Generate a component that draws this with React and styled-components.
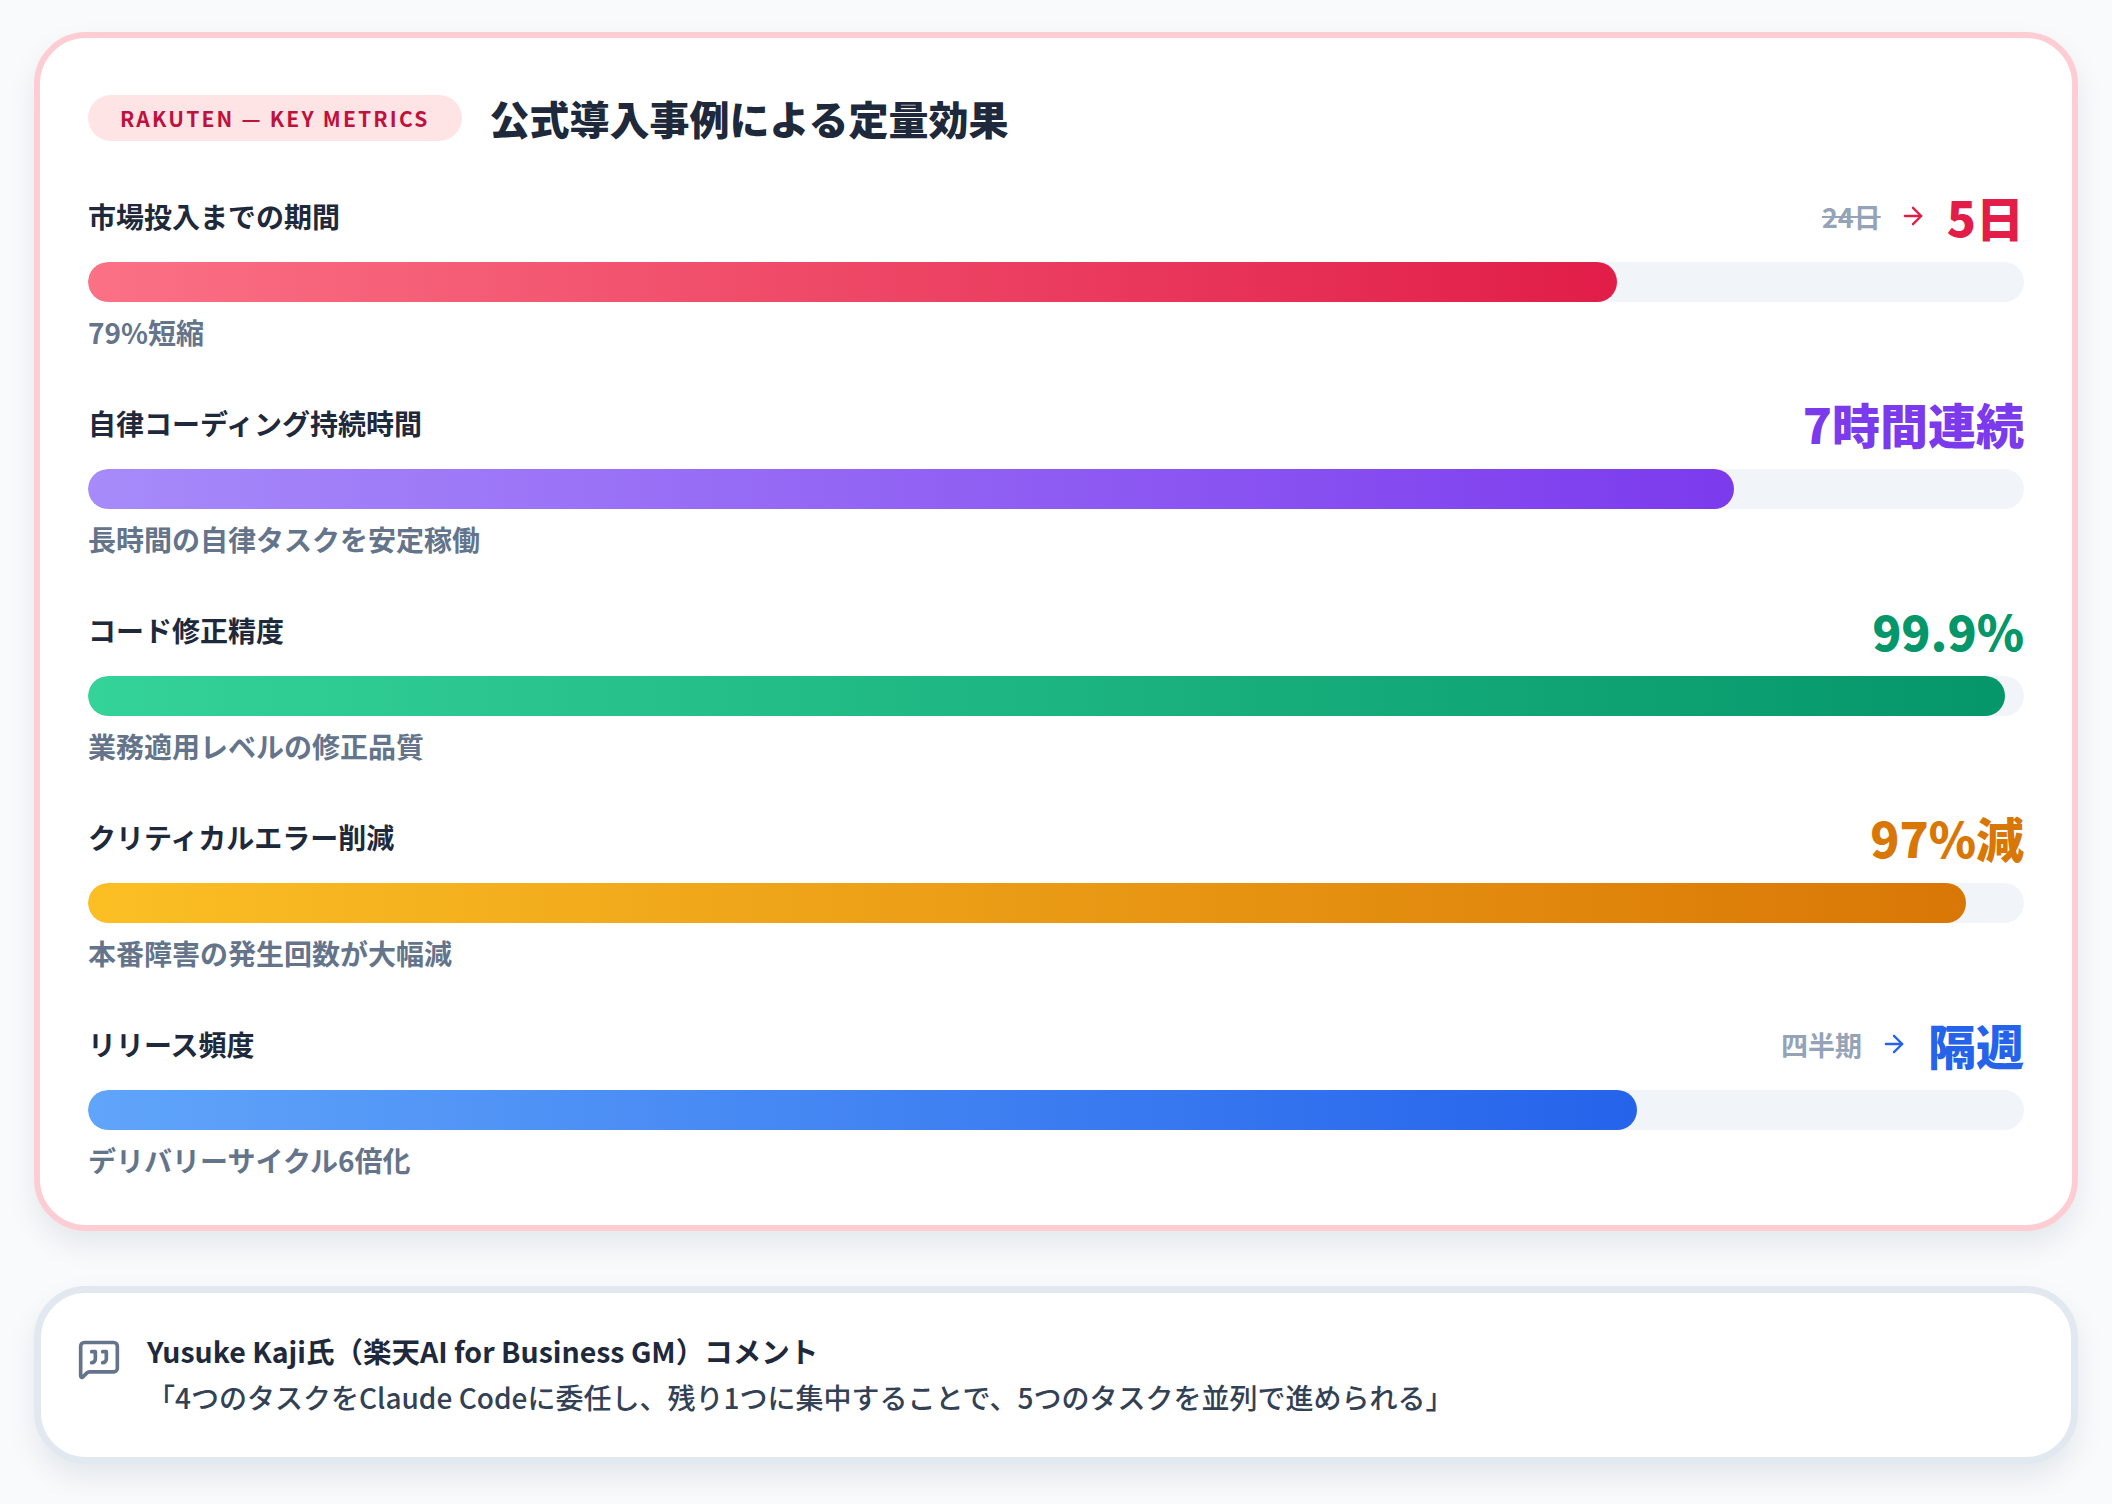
import React from 'react'
import styled, {createGlobalStyle} from 'styled-components'
import {MessageSquareQuote, ArrowRight} from 'lucide-react'

const GlobalStyle = createGlobalStyle`
  body {
    margin: 0;
    background: #f8fafc;
    font-family: "Noto Sans CJK JP", "Noto Sans", sans-serif;
  }
`;

const Page = styled.div`
  padding: 32px 34px;
`;

const Card = styled.div`
  background: #ffffff;
  border: 6px solid #fecdd3;
  border-radius: 52px;
  padding: 51px 48px 48px;
  box-shadow: 0 14px 30px rgba(15, 23, 42, 0.08);
`;

const Header = styled.div`
  display: flex;
  align-items: center;
  gap: 28px;
  margin-bottom: 41px;
`;

const Badge = styled.span`
  display: inline-flex;
  align-items: center;
  height: 46px;
  padding: 0 32px;
  border-radius: 23px;
  background: #ffe4e6;
  color: #be123c;
  font-size: 21px;
  font-weight: 700;
  letter-spacing: 2.2px;
`;

const Title = styled.h1`
  margin: 0;
  font-size: 40px;
  font-weight: 900;
  color: #1e293b;
`;

const Rows = styled.div`
  display: flex;
  flex-direction: column;
  gap: 46px;
`;

const Row = styled.div``;

const LabelLine = styled.div`
  display: flex;
  justify-content: space-between;
  align-items: center;
  height: 56px;
`;

const Label = styled.span`
  font-size: 28px;
  font-weight: 700;
  color: #1e293b;
`;

const ValueGroup = styled.div`
  display: flex;
  align-items: center;
  gap: 18px;
`;

const Before = styled.span`
  font-size: 27px;
  font-weight: 700;
  color: #94a3b8;
  text-decoration: ${(p) => (p.strike ? 'line-through' : 'none')};
`;

const Arrow = styled.span`
  display: flex;
  color: ${(p) => p.color};
  margin-right: 2px;
`;

const Value = styled.span`
  font-size: 48px;
  font-weight: 900;
  line-height: 1;
  color: ${(p) => p.color};
`;

const Track = styled.div`
  margin-top: 18px;
  height: 40px;
  border-radius: 20px;
  background: #f1f5f9;
  overflow: hidden;
`;

const Fill = styled.div`
  height: 100%;
  border-radius: 20px;
  background: linear-gradient(90deg, ${(p) => p.from}, ${(p) => p.to});
`;

const Sub = styled.div`
  margin-top: 13px;
  font-size: 28px;
  line-height: 34px;
  font-weight: 700;
  color: #64748b;
`;

const QuoteCard = styled.div`
  margin-top: 55px;
  background: #ffffff;
  border: 7px solid #e2e8f0;
  border-radius: 52px;
  padding: 38px 36px 40px;
  display: flex;
  gap: 26px;
  box-shadow: 0 14px 30px rgba(15, 23, 42, 0.08);
`;

const QuoteIcon = styled.div`
  color: #64748b;
  padding-top: 6px;
`;

const QuoteBody = styled.div`
  display: flex;
  flex-direction: column;
  gap: 6px;
`;

const QuoteTitle = styled.div`
  font-size: 28.5px;
  font-weight: 700;
  color: #1e293b;
  line-height: 40px;
`;

const QuoteText = styled.div`
  font-size: 28px;
  font-weight: 500;
  color: #334155;
  line-height: 40px;
`;

const metrics = [
  {label: '市場投入までの期間', before: '24日', strike: true, value: '5日', color: '#e11d48', from: '#fb7185', to: '#e11d48', pct: 79, sub: '79%短縮'},
  {label: '自律コーディング持続時間', value: '7時間連続', color: '#7c3aed', from: '#a78bfa', to: '#7c3aed', pct: 85, sub: '長時間の自律タスクを安定稼働'},
  {label: 'コード修正精度', value: '99.9%', color: '#059669', from: '#34d399', to: '#059669', pct: 99, sub: '業務適用レベルの修正品質'},
  {label: 'クリティカルエラー削減', value: '97%減', color: '#d97706', from: '#fbbf24', to: '#d97706', pct: 97, sub: '本番障害の発生回数が大幅減'},
  {label: 'リリース頻度', before: '四半期', value: '隔週', color: '#2563eb', from: '#60a5fa', to: '#2563eb', pct: 80, sub: 'デリバリーサイクル6倍化'},
];

export default function App() {
  return (
    <Page>
      <GlobalStyle/>
      <Card>
        <Header>
          <Badge>RAKUTEN — KEY METRICS</Badge>
          <Title>公式導入事例による定量効果</Title>
        </Header>
        <Rows>
          {metrics.map((m) => (
            <Row key={m.label}>
              <LabelLine>
                <Label>{m.label}</Label>
                <ValueGroup>
                  {m.before && <Before strike={m.strike}>{m.before}</Before>}
                  {m.before && <Arrow color={m.color}><ArrowRight size={28} strokeWidth={2}/></Arrow>}
                  <Value color={m.color}>{m.value}</Value>
                </ValueGroup>
              </LabelLine>
              <Track>
                <Fill from={m.from} to={m.to} style={{width: m.pct + '%'}}/>
              </Track>
              <Sub>{m.sub}</Sub>
            </Row>
          ))}
        </Rows>
      </Card>
      <QuoteCard>
        <QuoteIcon>
          <MessageSquareQuote size={44} strokeWidth={2}/>
        </QuoteIcon>
        <QuoteBody>
          <QuoteTitle>Yusuke Kaji氏（楽天AI for Business GM）コメント</QuoteTitle>
          <QuoteText>「4つのタスクをClaude Codeに委任し、残り1つに集中することで、5つのタスクを並列で進められる」</QuoteText>
        </QuoteBody>
      </QuoteCard>
    </Page>
  )
}
